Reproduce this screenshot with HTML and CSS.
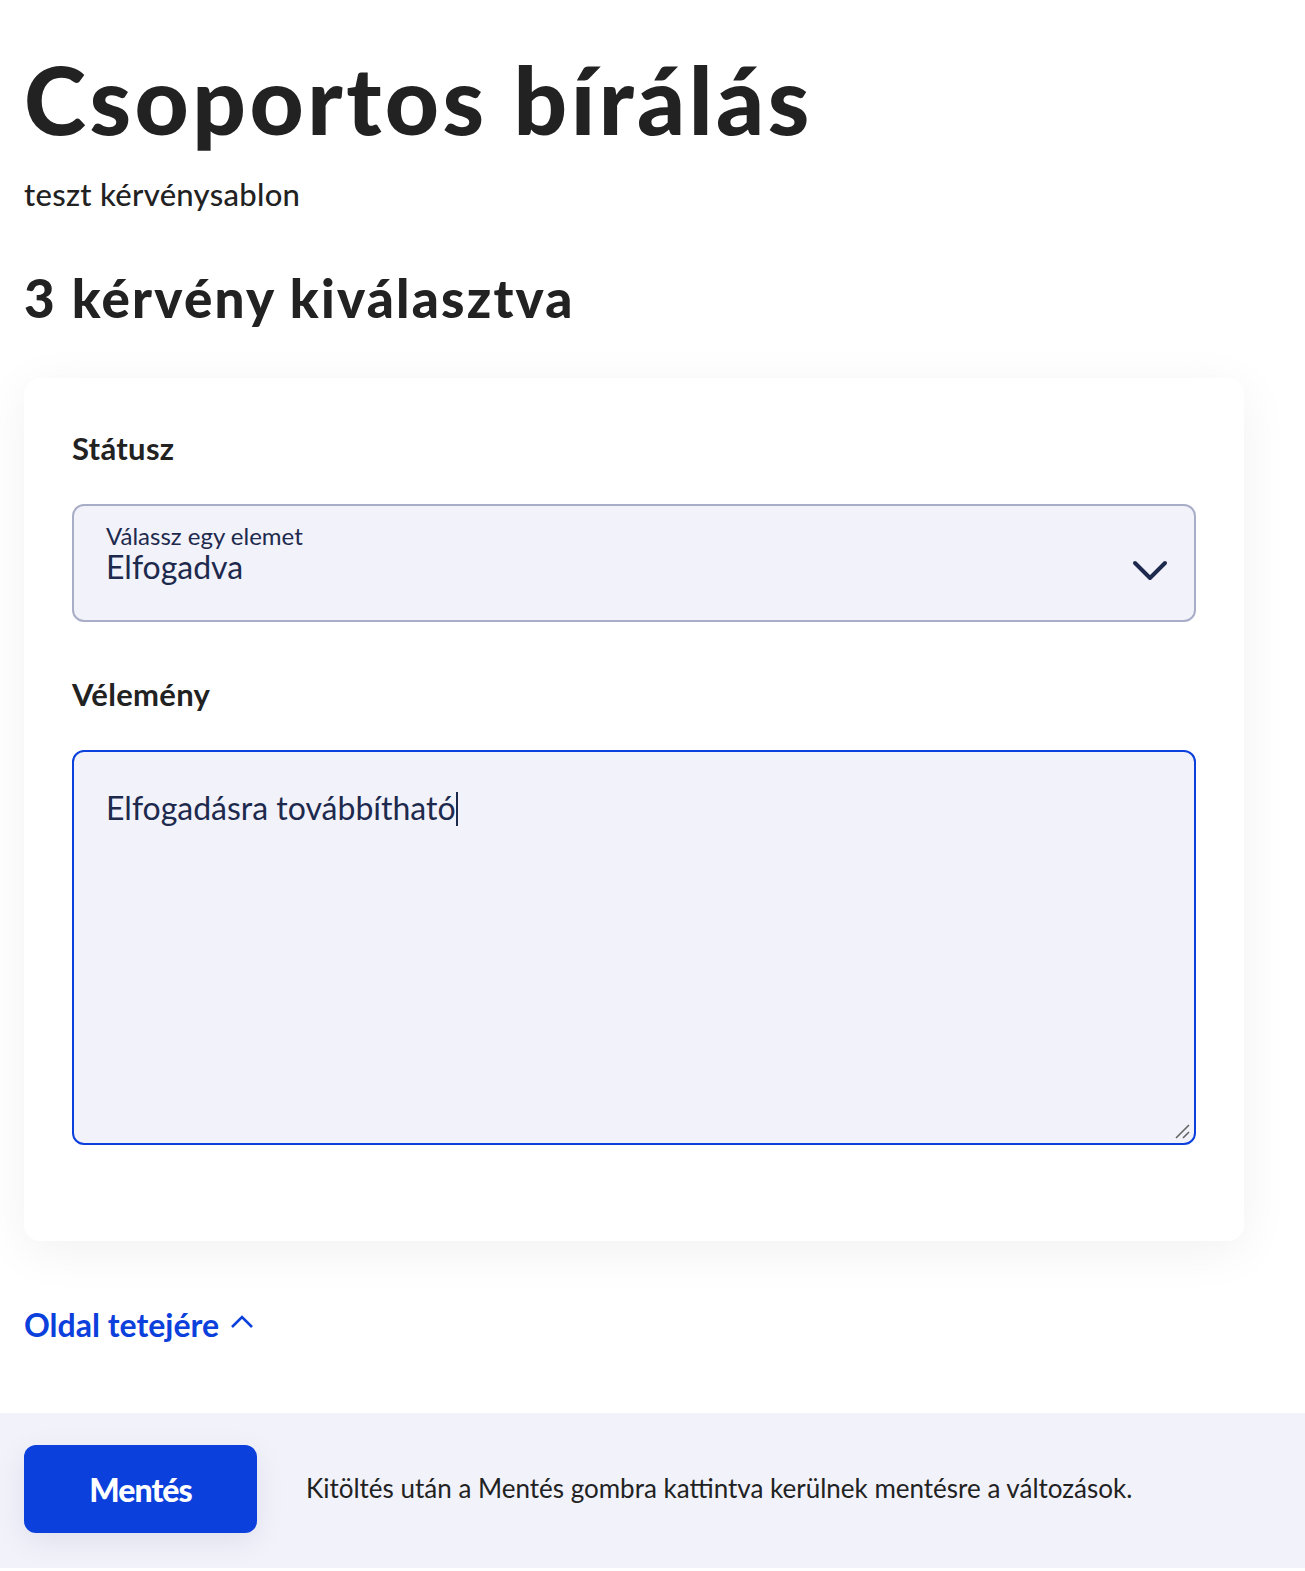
FILE: index.html
```
<!doctype html>
<html>
<head>
<meta charset="utf-8">
<title>Csoportos bírálás</title>
<link rel="stylesheet" href="styles.css">
</head>
<body>
	<div id="page">
		<h1 class="title">Csoportos bírálás</h1>
		<p class="subtitle">teszt kérvénysablon</p>
		<h2 class="count">3 kérvény kiválasztva</h2>

		<div class="card">
			<div class="field-label">Státusz</div>
			<div class="select">
				<div class="select-text">
					<div class="select-hint">Válassz egy elemet</div>
					<div class="select-value">Elfogadva</div>
				</div>
				<svg class="chevron" width="36" height="22" viewBox="0 0 36 22"><path d="M3 3 L18 18 L33 3" fill="none" stroke="#1e2a4d" stroke-width="4" stroke-linecap="round" stroke-linejoin="round"/></svg>
			</div>

			<div class="field-label second">Vélemény</div>
			<div class="textarea">
				<span class="textarea-text">Elfogadásra továbbítható</span><span class="caret"></span>
				<svg class="grip" width="16" height="16" viewBox="0 0 16 16"><path d="M2 15 L15 2 M9 15 L15 9" stroke="#666" stroke-width="1.6"/></svg>
			</div>
		</div>

		<a class="top-link" href="#">Oldal tetejére
			<svg width="26" height="18" viewBox="0 0 26 18"><path d="M3 14 L13 4 L23 14" fill="none" stroke="#0b40dc" stroke-width="2.6"/></svg>
		</a>
	</div>

	<div class="footer">
		<button class="save">Mentés</button>
		<span class="footer-text">Kitöltés után a Mentés gombra kattintva kerülnek mentésre a változások.</span>
	</div>
</body>
</html>
```

FILE: styles.css
```
html {
  background: #fff;
}
body {
  margin: 0;
  font-family: Lato, "Open Sans", sans-serif;
  color: #222;
}

#page {
  padding: 0 64px 0 24px;
}

.title {
  margin: 0;
  padding-top: 44px;
  font-family: Lato, sans-serif;
  font-weight: 900;
  font-size: 94px;
  line-height: 110px;
  letter-spacing: 3.5px;
  color: #222;
}
.subtitle {
  margin: 22px 0 0 0;
  font-size: 31px;
  font-weight: 500;
  line-height: 36px;
  letter-spacing: 0.3px;
}
.count {
  margin: 56px 0 0 0;
  font-weight: 900;
  font-size: 53px;
  line-height: 60px;
  letter-spacing: 2.2px;
}

.card {
  margin-top: 50px;
  margin-right: -3px;
  background: #fff;
  border-radius: 16px;
  box-shadow: 0 10px 50px rgba(0, 0, 0, 0.06);
  padding: 50px 48px 96px 48px;
}
.field-label {
  font-size: 31px;
  font-weight: 700;
  line-height: 40px;
  letter-spacing: 0.3px;
  color: #222;
}
.field-label.second {
  margin-top: 52px;
}

.select {
  margin-top: 36px;
  height: 118px;
  box-sizing: border-box;
  border: 2px solid #a9adc8;
  border-radius: 12px;
  background: #f1f2fa;
  display: flex;
  align-items: center;
  padding: 0 26px 0 32px;
}
.select-text {
  flex: 1;
  margin-top: -20px;
}
.select-hint {
  font-size: 24px;
  line-height: 28px;
  color: #1e2a4d;
}
.select-value {
  font-size: 32px;
  line-height: 34px;
  color: #1e2a4d;
}
.chevron {
  margin-top: 16px;
}

.textarea {
  position: relative;
  margin-top: 36px;
  height: 395px;
  box-sizing: border-box;
  border: 2px solid #0b40dc;
  border-radius: 12px;
  background: #f1f2fa;
  padding: 35px 32px;
  font-size: 32px;
  line-height: 42px;
  color: #1e2a4d;
}
.caret {
  display: inline-block;
  width: 2px;
  height: 34px;
  background: #1e2a4d;
  vertical-align: -6px;
}
.grip {
  position: absolute;
  right: 4px;
  bottom: 4px;
}

.top-link {
  display: inline-flex;
  align-items: center;
  gap: 10px;
  margin-top: 64px;
  margin-bottom: 68px;
  font-size: 32px;
  font-weight: 700;
  line-height: 40px;
  letter-spacing: 0;
  color: #0b40dc;
  text-decoration: none;
}
.top-link svg {
  margin-top: -6px;
}

.footer {
  background: #f1f2fa;
  height: 155px;
  display: flex;
  align-items: center;
  padding-left: 24px;
}
.save {
  width: 233px;
  height: 88px;
  border: none;
  border-radius: 12px;
  background: #0b40dc;
  color: #fff;
  font-family: Lato, sans-serif;
  font-size: 32px;
  font-weight: 900;
  letter-spacing: -1px;
  box-shadow: 0 8px 30px rgba(0, 0, 60, 0.08);
  margin-top: -3px;
}
.footer-text {
  margin-left: 49px;
  margin-top: -5px;
  font-size: 26px;
  color: #222;
}
```
